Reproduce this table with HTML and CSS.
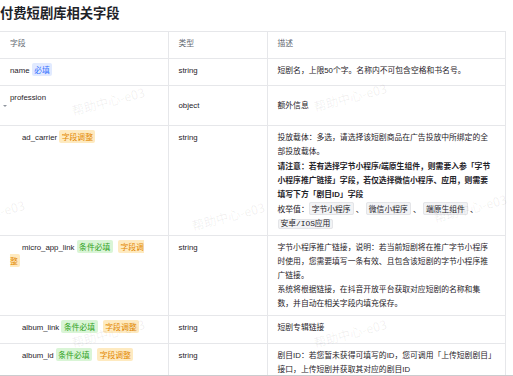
FILE: index.html
```html
<!DOCTYPE html>
<html lang="zh-CN">
<head>
<meta charset="utf-8">
<title>付费短剧库相关字段</title>
<link rel="stylesheet" href="styles.css">
</head>
<body>
<div class="page">
  <h2 class="title">付费短剧库相关字段</h2>
  <div class="table-wrap">
    <table class="fields">
      <colgroup><col class="c1"><col class="c2"><col class="c3"></colgroup>
      <thead>
        <tr class="h27"><th>字段</th><th>类型</th><th>描述</th></tr>
      </thead>
      <tbody>
        <tr class="h27">
          <td class="f">name <span class="tag blue">必填</span></td>
          <td>string</td>
          <td>短剧名，上限50个字。名称内不可包含空格和书名号。</td>
        </tr>
        <tr class="h40 mid">
          <td class="f prof-cell"><div class="prof"><span class="caret"></span><span>profession</span></div></td>
          <td>object</td>
          <td>额外信息</td>
        </tr>
        <tr>
          <td class="f sub">ad_carrier <span class="tag orange">字段调整</span></td>
          <td>string</td>
          <td class="desc">
            <p>投放载体：多选，请选择该短剧商品在广告投放中所绑定的全部投放载体。</p>
            <p class="strong">请注意：若有选择字节小程序/端原生组件，则需要入参「字节小程序推广链接」字段，若仅选择微信小程序、应用，则需要填写下方「剧目ID」字段</p>
            <p>枚举值：<code>字节小程序</code> 、 <code>微信小程序</code> 、 <code>端原生组件</code> 、 <code class="mono">安卓/IOS应用</code></p>
          </td>
        </tr>
        <tr>
          <td class="f sub wide">micro_app_link <span class="tag green">条件必填</span> <span class="tag orange">字段调整</span></td>
          <td>string</td>
          <td class="desc tight">
            <p>字节小程序推广链接，说明：若当前短剧将在推广字节小程序时使用，您需要填写一条有效、且包含该短剧的字节小程序推广链接。</p>
            <p>系统将根据链接，在抖音开放平台获取对应短剧的名称和集数，并自动在相关字段内填充保存。</p>
          </td>
        </tr>
        <tr class="h28">
          <td class="f sub">album_link <span class="tag green">条件必填</span> <span class="tag orange">字段调整</span></td>
          <td>string</td>
          <td>短剧专辑链接</td>
        </tr>
        <tr>
          <td class="f sub">album_id <span class="tag green">条件必填</span> <span class="tag orange">字段调整</span></td>
          <td>string</td>
          <td class="desc"><p>剧目ID：若您暂未获得可填写的ID，您可调用「上传短剧剧目」接口，上传短剧并获取其对应的剧目ID</p></td>
        </tr>
      </tbody>
    </table>
  </div>
  <div class="watermarks" aria-hidden="true">
    <span class="wm w1">帮助中心-e03</span>
    <span class="wm w2">帮助中心-e03</span>
    <span class="wm w3">帮助中心-e03</span>
    <span class="wm w4">帮助中心-e03</span>
    <span class="wm w5">帮助中心-e03</span>
    <span class="wm w6">帮助中心-e03</span>
    <span class="wm w7">帮助中心-e03</span>
  </div>
</div>
</body>
</html>
```
FILE: styles.css
```css
* { box-sizing: border-box; }
html, body { margin: 0; padding: 0; background: #fff; }
body {
  font-family: "Liberation Sans", "Noto Sans CJK SC", sans-serif;
  color: #1f2329;
}
.page {
  position: relative;
  width: 513px;
  height: 376px;
  display: flex;
  flex-direction: column;
  overflow: hidden;
}
.title {
  margin: 0 0 5px;
  font-size: 13.3px;
  line-height: 26px;
  font-weight: 600;
  color: #1f2329;
  font-family: "Noto Sans CJK SC", sans-serif;
}
.table-wrap {
  flex: 1 1 auto;
  min-height: 0;
  overflow: hidden;
  border-bottom: 1px solid #cbcccf;
}
.fields {
  width: 505px;
  table-layout: fixed;
  border-collapse: collapse;
  font-size: 7.8px;
  line-height: 14px;
}
.c1 { width: 168px; }
.c2 { width: 99px; }
.c3 { width: 238px; }
.fields th, .fields td {
  border: 1px solid #e6e7ea;
  border-left: none;
  padding: 5px 10px 4px;
  text-align: left;
  vertical-align: top;
  font-weight: 400;
}
.fields th + th, .fields td + td { border-left: 1px solid #e6e7ea; }
.fields th { color: #646a73; }
.h27 { height: 27px; }
.h28 { height: 28px; }
.h40 { height: 40px; }
.fields .mid td { vertical-align: middle; }
.f { color: #1f2329; }
.sub { text-indent: 12px; }
.fields td.wide { padding-right: 18px; }
.fields td.prof-cell { padding-left: 3px; }
.prof {
  display: flex;
  height: 30px;
  align-items: flex-start;
}
.caret {
  align-self: center;
  flex: none;
  width: 0;
  height: 0;
  margin-right: 3px;
  border-left: 2px solid transparent;
  border-right: 2px solid transparent;
  border-top: 2.5px solid #8f959e;
}
.tag {
  padding: 1px 2.5px;
  border-radius: 2px;
  line-height: 10px;
  font-family: "Noto Sans CJK SC", sans-serif;
}
.tag + .tag { margin-left: 3px; }
.blue { background: #e1eaff; color: #3370ff; }
.green { background: #d9f5d6; color: #2ea121; }
.orange { background: #feeac0; color: #e38800; }
.desc p { margin: 0 0 1px; }
.desc.tight p { margin: 0; }
.desc p:last-child { margin-bottom: 0; }
.strong { font-weight: 700; }
code {
  font-family: "Noto Sans CJK SC", sans-serif;
  font-size: 7.8px;
  line-height: 10px;
  white-space: nowrap;
  background: #f2f3f5;
  border: 1px solid #e4e5e8;
  border-radius: 2px;
  padding: 0 2px;
  color: #1f2329;
}
code.mono { font-family: "Liberation Mono", "Noto Sans CJK SC", monospace; }
.watermarks {
  position: absolute;
  inset: 0;
  pointer-events: none;
}
.wm {
  position: absolute;
  transform: translate(-50%, -50%) rotate(-15deg);
  font-family: "Noto Sans CJK SC", sans-serif;
  font-size: 12.5px;
  color: rgba(31, 35, 41, 0.07);
  white-space: nowrap;
}
.w1 { left: 108px; top: 101px; }
.w2 { left: 350px; top: 97px; }
.w3 { left: -12px; top: 214px; }
.w4 { left: 228px; top: 216px; }
.w5 { left: 470px; top: 208px; }
.w6 { left: 108px; top: 333px; }
.w7 { left: 350px; top: 333px; }
```
